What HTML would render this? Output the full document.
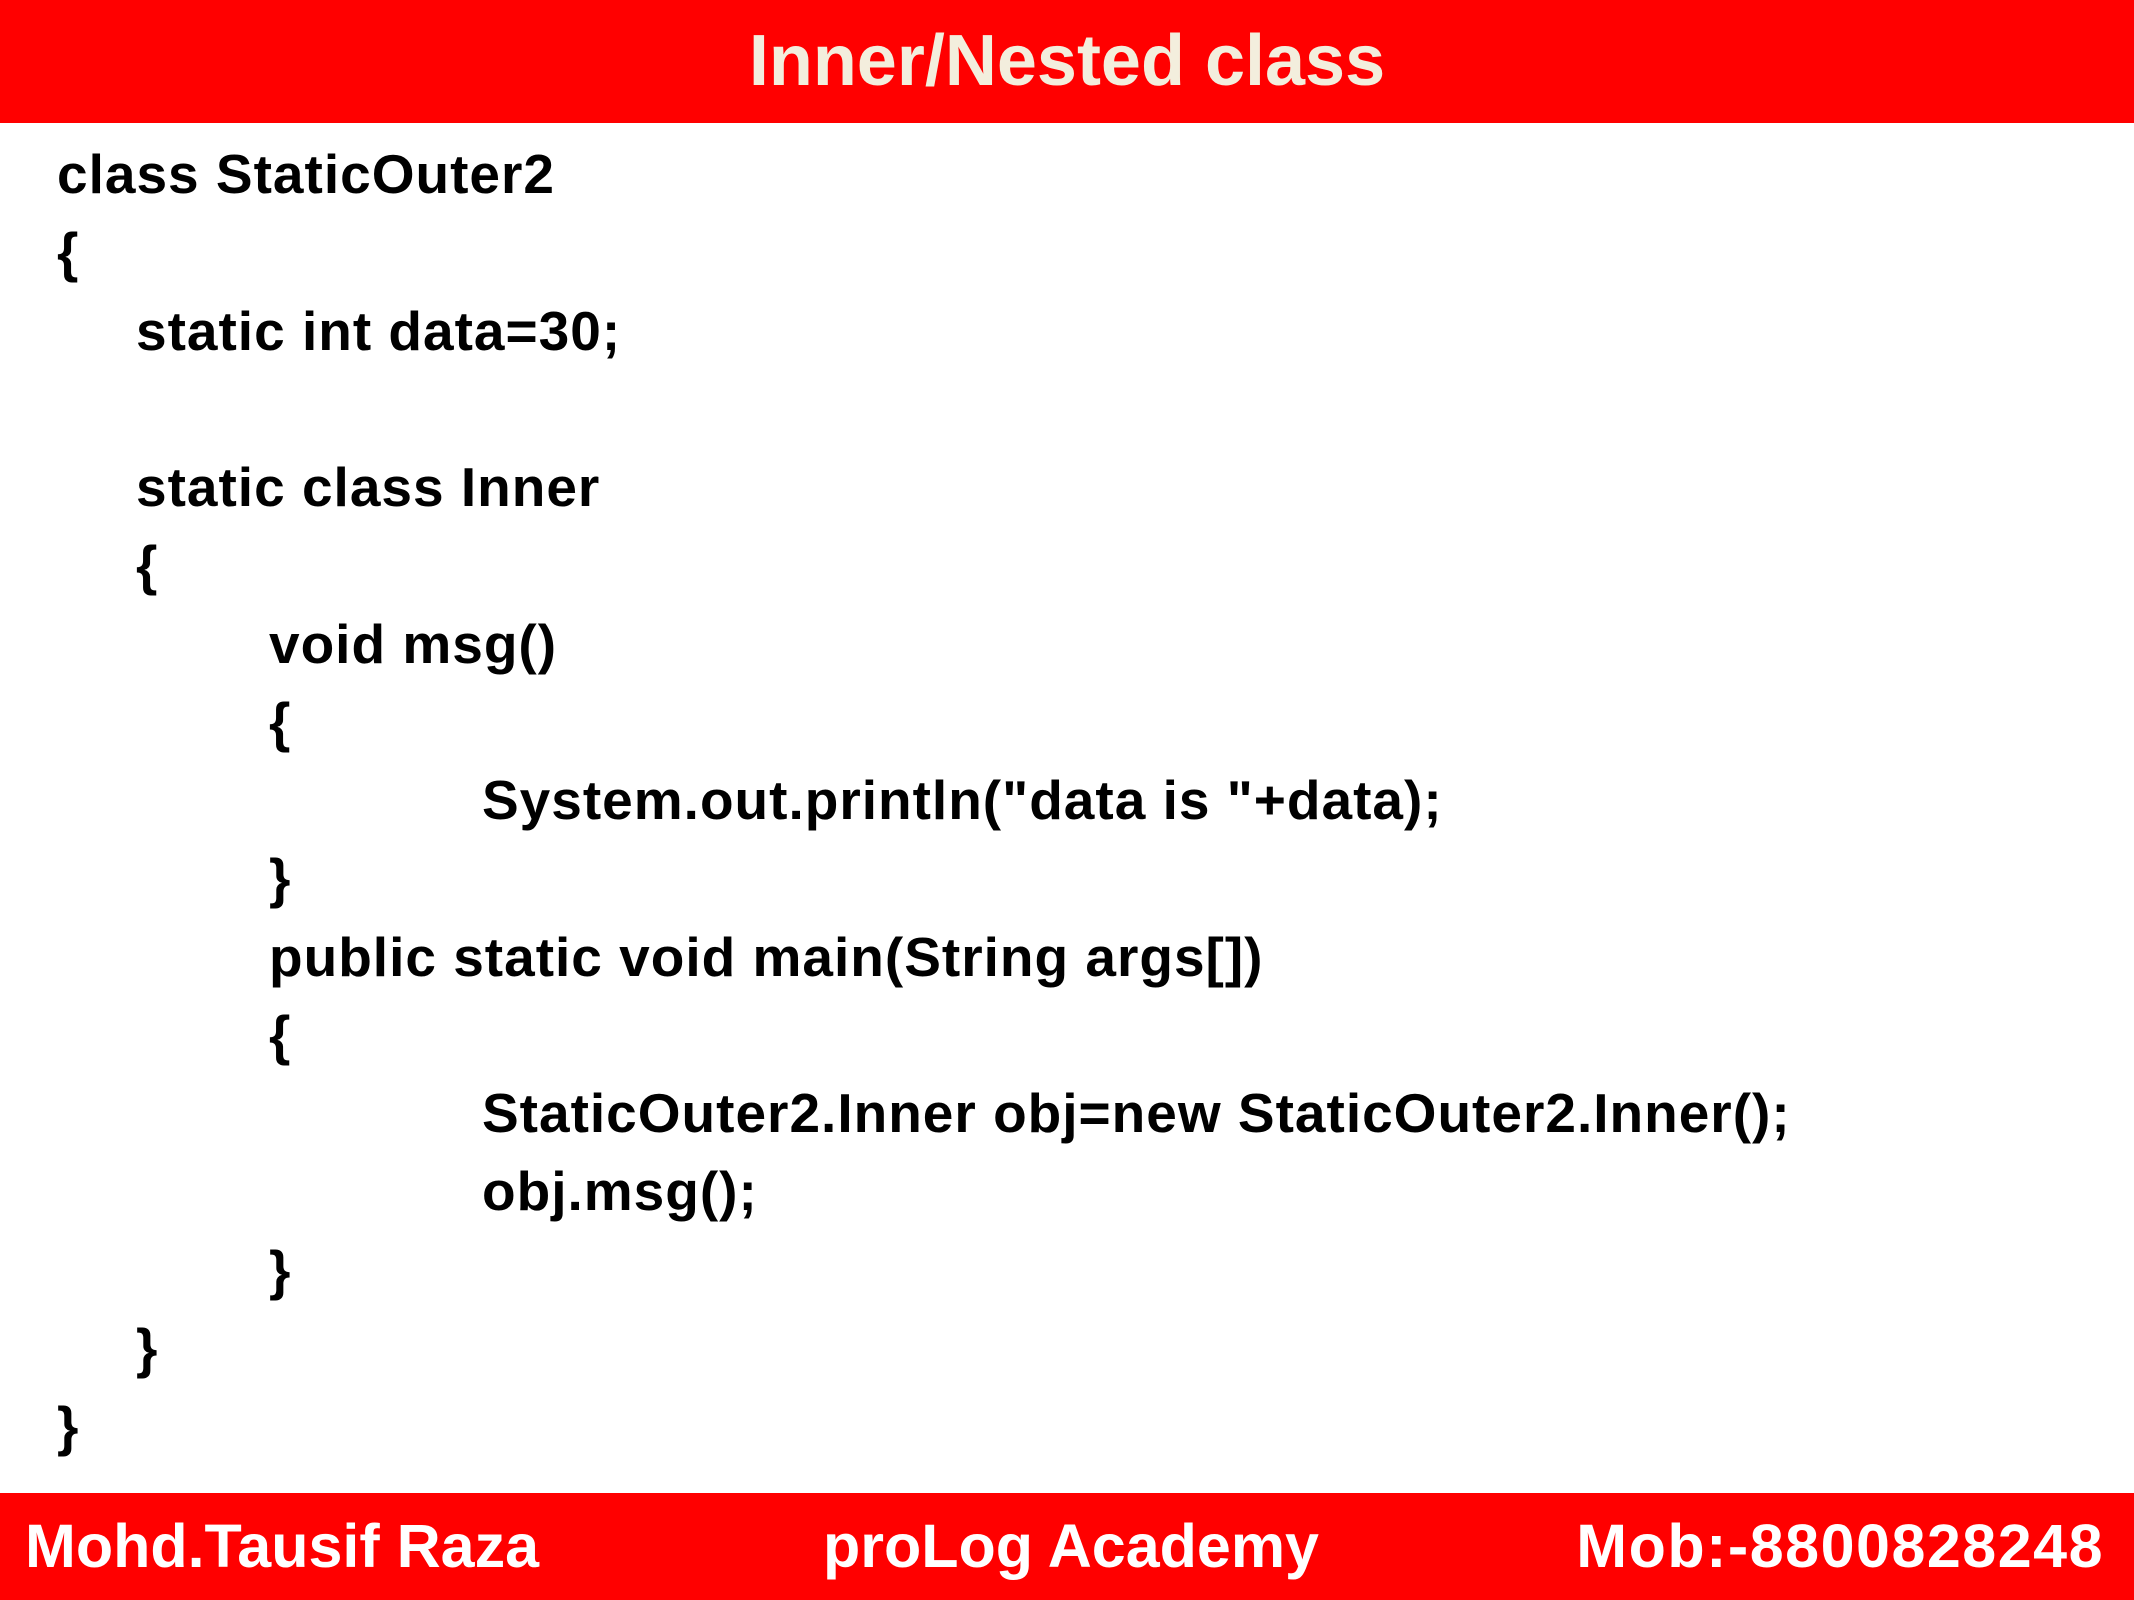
<!DOCTYPE html>
<html><head><meta charset="utf-8"><style>
html,body{margin:0;padding:0;background:#fff;}
body{width:2134px;height:1600px;position:relative;overflow:hidden;font-family:"Liberation Sans",Arial,sans-serif;font-weight:bold;}
.hdr{position:absolute;left:0;top:0;width:2134px;height:123px;background:#ff0000;}
.hdr span{position:absolute;left:0;width:2134px;top:0;line-height:123px;text-align:center;font-size:72px;color:#f3eedd;}
.ftr{position:absolute;left:0;top:1493px;width:2134px;height:107px;background:#ff0000;color:#fff;font-size:61px;}
.ftr span{position:absolute;top:0;line-height:107px;white-space:nowrap;}
.code{position:absolute;left:0;top:135px;font-size:55px;letter-spacing:1px;line-height:78.25px;color:#000;}
.code div{white-space:pre;height:78.25px;}
</style></head><body>
<div class="hdr"><span>Inner/Nested class</span></div>
<div class="code">
<div style="padding-left:57px">class StaticOuter2</div>
<div style="padding-left:57px">{</div>
<div style="padding-left:136px">static int data=30;</div>
<div></div>
<div style="padding-left:136px">static class Inner</div>
<div style="padding-left:136px">{</div>
<div style="padding-left:269px">void msg()</div>
<div style="padding-left:269px">{</div>
<div style="padding-left:482px">System.out.println("data is "+data);</div>
<div style="padding-left:269px">}</div>
<div style="padding-left:269px">public static void main(String args[])</div>
<div style="padding-left:269px">{</div>
<div style="padding-left:482px">StaticOuter2.Inner obj=new StaticOuter2.Inner();</div>
<div style="padding-left:482px">obj.msg();</div>
<div style="padding-left:269px">}</div>
<div style="padding-left:136px">}</div>
<div style="padding-left:57px">}</div>
</div>
<div class="ftr">
<span style="left:25px">Mohd.Tausif Raza</span>
<span style="left:823px">proLog Academy</span>
<span style="right:30px;letter-spacing:1.5px">Mob:-8800828248</span>
</div>
</body></html>
